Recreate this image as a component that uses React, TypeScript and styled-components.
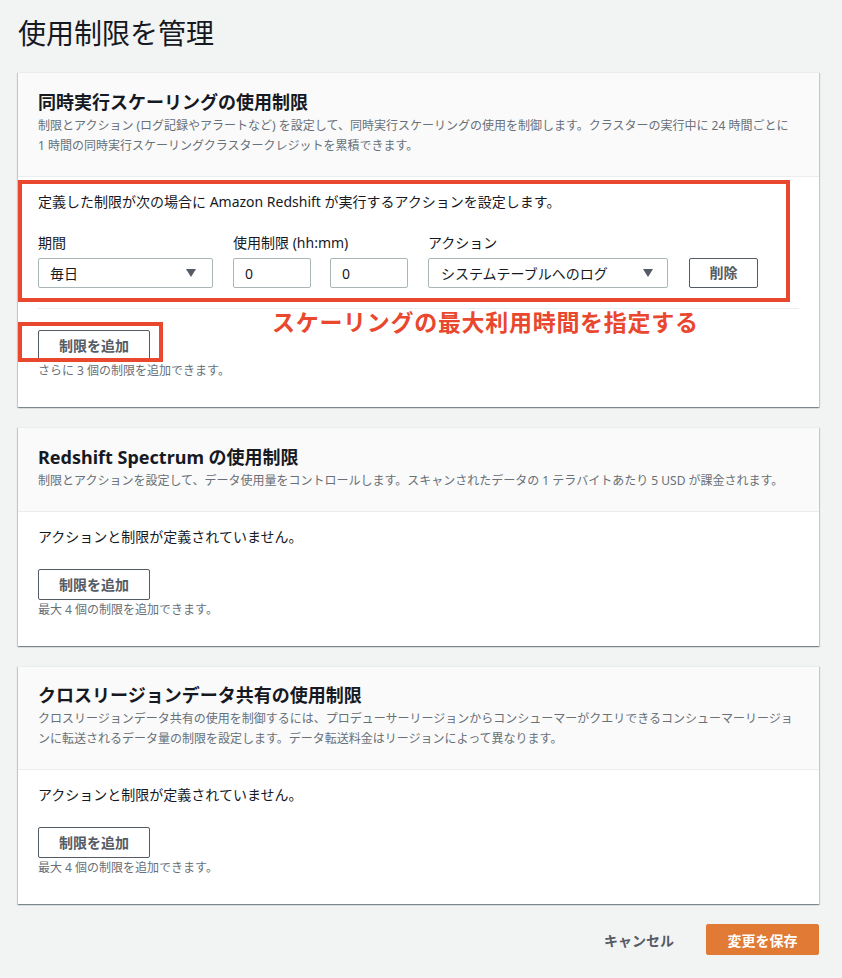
import React from "react";
import styled, { createGlobalStyle } from "styled-components";

const GlobalStyle = createGlobalStyle`
  html, body {
    margin: 0;
    padding: 0;
    background: #f2f3f3;
    font-family: "Noto Sans", "Noto Sans CJK JP", sans-serif;
    color: #16191f;
  }
  * { box-sizing: border-box; }
`;

const Page = styled.div`
  padding: 0 23px 0 18px;
  min-height: 978px;
`;

const PageTitle = styled.h1`
  margin: 15px 0 21px;
  font-size: 28px;
  line-height: 36px;
  font-weight: 400;
  color: #16191f;
`;

const Card = styled.section`
  background: #ffffff;
  border-top: 1px solid #eaeded;
  box-shadow: 0 1px 1px 0 rgba(0, 28, 36, 0.3), 1px 1px 1px 0 rgba(0, 28, 36, 0.15),
    -1px 1px 1px 0 rgba(0, 28, 36, 0.15);
  margin-bottom: 20px;
`;

const CardHeader = styled.header<{ $top?: number }>`
  background: #fafafa;
  border-bottom: 1px solid #eaeded;
  padding: ${(p) => p.$top ?? 18}px 20px 20px;
`;

const CardTitle = styled.h2`
  margin: 0;
  font-size: 18px;
  line-height: 22px;
  font-weight: 700;
  color: #16191f;
`;

const CardDesc = styled.p`
  margin: 3px 0 0;
  font-size: 12px;
  line-height: 20px;
  color: #687078;
`;

const CardBody = styled.div`
  position: relative;
  padding: 15px 20px 26px;
`;

const BodyText = styled.p`
  margin: 0;
  font-size: 14px;
  line-height: 20px;
  color: #16191f;
`;

const FormRow = styled.div`
  display: flex;
  align-items: flex-end;
  gap: 20px;
  margin-top: 21px;
`;

const Field = styled.div`
  display: flex;
  flex-direction: column;
  gap: 5px;
`;

const Label = styled.label`
  font-size: 14px;
  line-height: 20px;
  color: #16191f;
`;

const Pair = styled.div`
  display: flex;
  gap: 19px;
`;

const SelectBox = styled.div<{ $w: number; $pl: number; $pr: number }>`
  width: ${(p) => p.$w}px;
  height: 30px;
  display: flex;
  align-items: center;
  justify-content: space-between;
  padding: 0 ${(p) => p.$pr}px 0 ${(p) => p.$pl}px;
  border: 1px solid #aab7b8;
  border-radius: 2px;
  background: #fff;
  font-size: 14px;
  color: #16191f;
`;

const Caret = styled.span`
  width: 0;
  height: 0;
  border-left: 5px solid transparent;
  border-right: 5px solid transparent;
  border-top: 8px solid #545b64;
`;

const TextInput = styled.div`
  width: 78px;
  height: 30px;
  display: flex;
  align-items: center;
  padding: 0 11px;
  border: 1px solid #aab7b8;
  border-radius: 2px;
  background: #fff;
  font-size: 14px;
  color: #16191f;
`;

const NormalButton = styled.button<{ $h?: number }>`
  height: ${(p) => p.$h ?? 31}px;
  padding: 0 20px;
  border: 1px solid #545b64;
  border-radius: 2px;
  background: #fff;
  color: #545b64;
  font-family: inherit;
  font-size: 14px;
  font-weight: 700;
  line-height: 20px;
  cursor: pointer;
`;

const RemoveButton = styled(NormalButton)`
  width: 69px;
  margin-left: 1px;
  padding: 0;
`;

const Separator = styled.hr`
  border: 0;
  border-top: 1px solid #eaeded;
  margin: 20px 0 21px;
`;

const Helper = styled.p`
  margin: 0;
  font-size: 12px;
  line-height: 20px;
  color: #687078;
`;

const Spaced = styled.div`
  margin-top: 22px;
`;

const HighlightBox = styled.div<{ $l: number; $t: number; $w: number; $h: number }>`
  position: absolute;
  left: ${(p) => p.$l}px;
  top: ${(p) => p.$t}px;
  width: ${(p) => p.$w}px;
  height: ${(p) => p.$h}px;
  border: 4px solid #e9472e;
  pointer-events: none;
`;

const Annotation = styled.div`
  position: absolute;
  left: 254px;
  top: 131px;
  font-size: 23px;
  line-height: 28px;
  font-weight: 700;
  letter-spacing: 0.7px;
  color: #e9472e;
  white-space: nowrap;
  pointer-events: none;
`;

const Footer = styled.div`
  display: flex;
  justify-content: flex-end;
  align-items: center;
  gap: 12px;
`;

const LinkButton = styled.button`
  height: 31px;
  padding: 0 20px;
  border: 0;
  background: transparent;
  color: #545b64;
  font-family: inherit;
  font-size: 14px;
  font-weight: 700;
  cursor: pointer;
`;

const PrimaryButton = styled.button`
  height: 31px;
  width: 113px;
  border: 1px solid #e07a35;
  border-radius: 2px;
  background: #e07a35;
  color: #fff;
  font-family: inherit;
  font-size: 14px;
  font-weight: 700;
  cursor: pointer;
`;

function EmptyLimits({ helper }: { helper: string }) {
  return (
    <CardBody>
      <BodyText>アクションと制限が定義されていません。</BodyText>
      <Spaced>
        <NormalButton>制限を追加</NormalButton>
      </Spaced>
      <Helper>{helper}</Helper>
    </CardBody>
  );
}

export default function App() {
  return (
    <>
      <GlobalStyle />
      <Page>
        <PageTitle>使用制限を管理</PageTitle>

        <Card>
          <CardHeader $top={18}>
            <CardTitle>同時実行スケーリングの使用制限</CardTitle>
            <CardDesc>
              制限とアクション (ログ記録やアラートなど) を設定して、同時実行スケーリングの使用を制御します。クラスターの実行中に 24 時間ごとに
              <br />1 時間の同時実行スケーリングクラスタークレジットを累積できます。
            </CardDesc>
          </CardHeader>
          <CardBody>
            <BodyText>定義した制限が次の場合に Amazon Redshift が実行するアクションを設定します。</BodyText>
            <FormRow>
              <Field>
                <Label>期間</Label>
                <SelectBox $w={175} $pl={11} $pr={16}>
                  <span>毎日</span>
                  <Caret />
                </SelectBox>
              </Field>
              <Field>
                <Label>使用制限 (hh:mm)</Label>
                <Pair>
                  <TextInput>0</TextInput>
                  <TextInput>0</TextInput>
                </Pair>
              </Field>
              <Field>
                <Label>アクション</Label>
                <SelectBox $w={240} $pl={12} $pr={14}>
                  <span>システムテーブルへのログ</span>
                  <Caret />
                </SelectBox>
              </Field>
              <RemoveButton $h={30}>削除</RemoveButton>
            </FormRow>
            <Separator />
            <NormalButton>制限を追加</NormalButton>
            <Helper>さらに 3 個の制限を追加できます。</Helper>

            <HighlightBox $l={0} $t={3} $w={772} $h={122} />
            <Annotation>スケーリングの最大利用時間を指定する</Annotation>
            <HighlightBox $l={0} $t={145} $w={145} $h={40} />
          </CardBody>
        </Card>

        <Card>
          <CardHeader $top={18}>
            <CardTitle>Redshift Spectrum の使用制限</CardTitle>
            <CardDesc>
              制限とアクションを設定して、データ使用量をコントロールします。スキャンされたデータの 1 テラバイトあたり 5 USD が課金されます。
            </CardDesc>
          </CardHeader>
          <EmptyLimits helper="最大 4 個の制限を追加できます。" />
        </Card>

        <Card>
          <CardHeader $top={17}>
            <CardTitle>クロスリージョンデータ共有の使用制限</CardTitle>
            <CardDesc>
              クロスリージョンデータ共有の使用を制御するには、プロデューサーリージョンからコンシューマーがクエリできるコンシューマーリージョ
              <br />
              ンに転送されるデータ量の制限を設定します。データ転送料金はリージョンによって異なります。
            </CardDesc>
          </CardHeader>
          <EmptyLimits helper="最大 4 個の制限を追加できます。" />
        </Card>

        <Footer>
          <LinkButton>キャンセル</LinkButton>
          <PrimaryButton>変更を保存</PrimaryButton>
        </Footer>
      </Page>
    </>
  );
}
